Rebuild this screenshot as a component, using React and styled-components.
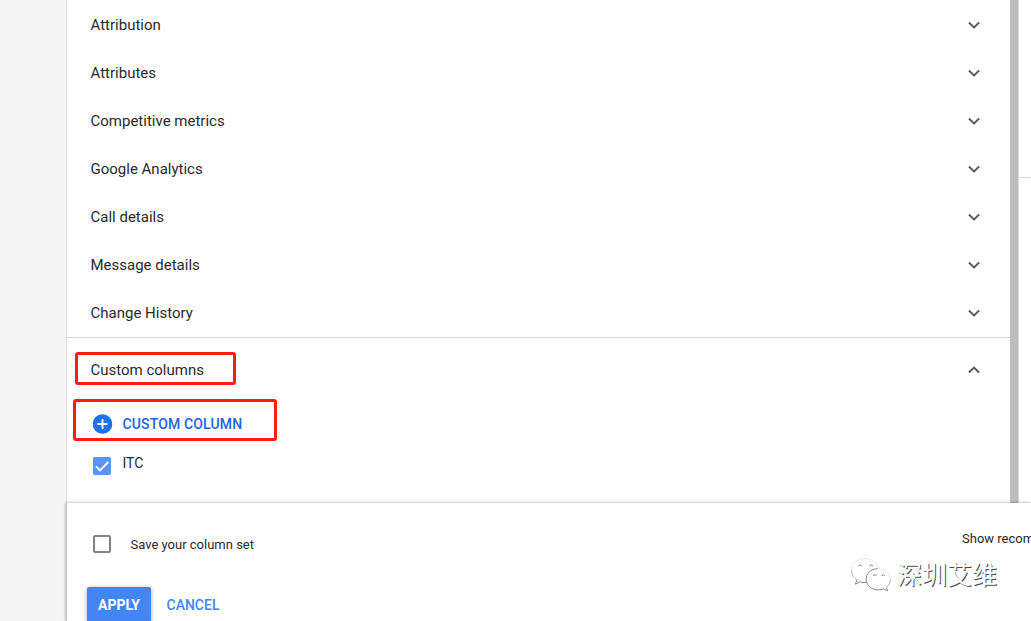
import React, {useState} from 'react';
import styled, {createGlobalStyle} from 'styled-components';

const groups = [
    'Attribution',
    'Attributes',
    'Competitive metrics',
    'Google Analytics',
    'Call details',
    'Message details',
    'Change History'
];

function Chevron({up})
{
    return (
        <ChevronIcon viewBox="0 0 12 8" $up={up}>
            <path d="M0.9 1.5 L6 6.5 L11.1 1.5"/>
        </ChevronIcon>
    );
}

function WeChatMark()
{
    return (
        <MarkIcon viewBox="0 0 42 36">
            <path className="faint" d="M29 11.5 C27 5 21 1.5 14.5 1.5 C7 1.5 1.5 6.5 1.5 13"/>
            <path className="soft" d="M1.5 13 C1.5 18 3.5 21 7 23.5"/>
            <path d="M7 23.5 L5.5 28 L10.5 25.5 C12.5 26.3 14.5 26.5 17 26"/>
            <path d="M28.5 12 C21.5 12 16.5 16.8 16.5 22.8 C16.5 29 22 33.8 29 33.8 C31 33.8 32.8 33.4 34.5 32.8 L38.5 34.8 L37.5 31.2"/>
            <path className="soft" d="M37.5 31.2 C40 29 41.3 26.3 41.3 23"/>
            <path className="faint" d="M41.3 23 C41.3 17 35.5 12 28.5 12"/>
            <path d="M8.5 9.6 C9 7.6 11.5 7.6 12 9.6 M20 9.6 C20.5 7.6 23 7.6 23.5 9.6 M23.8 19.6 C24.2 17.8 26.6 17.8 27 19.6 M32.5 19.6 C32.9 17.8 35.3 17.8 35.7 19.6"/>
        </MarkIcon>
    );
}

function App()
{
    const [itc, setItc] = useState(true);
    const [save, setSave] = useState(false);

    return (
        <>
            <GlobalStyle/>
            <Page>
                <Sidebar/>
                <Main>
                    <Upper>
                        <Panel>
                            <GroupList>
                                {groups.map((name) => (
                                    <GroupRow key={name}>
                                        <span>{name}</span>
                                        <Chevron/>
                                    </GroupRow>
                                ))}
                            </GroupList>
                            <CustomHeader>
                                <span>Custom columns</span>
                                <Chevron up/>
                            </CustomHeader>
                            <AddColumn>
                                <svg width="20" height="20" viewBox="0 0 20 20">
                                    <circle cx="9.5" cy="10" r="9.8" fill="#1a73e8"/>
                                    <path d="M9.5 5v10M4.5 10h10" stroke="#fff" strokeWidth="1.8"/>
                                </svg>
                                <span>CUSTOM COLUMN</span>
                            </AddColumn>
                            <ColumnOption onClick={() => setItc(!itc)}>
                                <Checkbox $checked={itc}>
                                    {itc && <svg width="18" height="18" viewBox="0 0 18 18">
                                        <path d="M3 9.3 L7 13.3 L15.3 5" fill="none" stroke="#fff" strokeWidth="1.9"/>
                                    </svg>}
                                </Checkbox>
                                <span>ITC</span>
                            </ColumnOption>
                            <Highlight $left={8} $top={352} $width={161} $height={33}/>
                            <Highlight $left={6} $top={399} $width={204} $height={42}/>
                        </Panel>
                        <Scrollbar/>
                        <Edge><EdgeTop/></Edge>
                    </Upper>
                    <Footer>
                        <FooterRow>
                            <SaveOption onClick={() => setSave(!save)}>
                                <Checkbox $checked={save}/>
                                Save your column set
                            </SaveOption>
                            <Preview>Show recom</Preview>
                        </FooterRow>
                        <Actions>
                            <Apply>APPLY</Apply>
                            <Cancel>CANCEL</Cancel>
                        </Actions>
                    </Footer>
                </Main>
                <Watermark>
                    <WeChatMark/>
                    <span>深圳艾维</span>
                </Watermark>
            </Page>
        </>
    );
}

const GlobalStyle = createGlobalStyle`
    *
    {
        box-sizing: border-box;
    }
    body
    {
        margin: 0;
        overflow: hidden;
        font-family: Roboto, "Liberation Sans", sans-serif;
        color: #2a2a2a;
        background-color: #fff;
    }
    button
    {
        border: none;
        padding: 0;
        background: none;
        font-family: inherit;
        cursor: pointer;
    }
`;

const Page = styled.div`
    position: relative;
    display: flex;
    width: 1031px;
    height: 621px;
    overflow: hidden;
`;

const Sidebar = styled.aside`
    flex: 0 0 66px;
    background-color: #f4f4f4;
`;

const Main = styled.main`
    flex: 1;
    min-width: 0;
    display: flex;
    flex-direction: column;
`;

const Upper = styled.div`
    flex: none;
    display: flex;
    height: 503px;
`;

const Panel = styled.section`
    position: relative;
    width: 944px;
    border-left: 1px solid #dadada;
    background-color: #fff;
`;

const GroupList = styled.div`
    padding-top: 1px;
    height: 338px;
    border-bottom: 1px solid #dadada;
`;

const GroupRow = styled.div`
    display: flex;
    align-items: center;
    justify-content: space-between;
    height: 48px;
    padding: 0 30px 0 23.5px;
    font-size: 15px;
    cursor: pointer;
`;

const CustomHeader = styled(GroupRow)`
    height: 64px;
`;

const ChevronIcon = styled.svg`
    width: 12px;
    height: 8px;
    fill: none;
    stroke: #4b5a6c;
    stroke-width: 1.9;
    transform: ${({$up}) => $up ? 'rotate(180deg)' : 'none'};
`;

const AddColumn = styled.button`
    display: flex;
    align-items: center;
    gap: 10px;
    height: 42px;
    margin: 1px 0 0 25.5px;
    color: #1a66e0;
    font-size: 14px;
    font-weight: 500;
    letter-spacing: 0.15px;
    span
    {
        padding-bottom: 1px;
    }
`;

const ColumnOption = styled.div`
    display: flex;
    gap: 11.5px;
    margin: 12px 0 0 26px;
    font-size: 14px;
    line-height: 13px;
    cursor: pointer;
`;

const Checkbox = styled.span`
    flex: none;
    display: block;
    width: 18px;
    height: 18px;
    border: ${({$checked}) => $checked ? 'none' : '2px solid #828282'};
    border-radius: 2px;
    background-color: ${({$checked}) => $checked ? '#5a95f5' : '#fff'};
    svg
    {
        display: block;
    }
`;

/* Red marker frames laid over the panel */
const Highlight = styled.div`
    position: absolute;
    left: ${({$left}) => $left}px;
    top: ${({$top}) => $top}px;
    width: ${({$width}) => $width}px;
    height: ${({$height}) => $height}px;
    border: 3px solid #fb1d10;
    border-radius: 3px;
    pointer-events: none;
`;

const Scrollbar = styled.div`
    width: 8px;
    background-color: #bdbdbd;
`;

const Edge = styled.div`
    flex: 1;
    border-left: 1px solid #dadada;
`;

const EdgeTop = styled.div`
    height: 178px;
    border-bottom: 1px solid #dadada;
`;

const Footer = styled.footer`
    position: relative;
    flex: 1;
    min-height: 0;
    border-left: 1px solid #c4c4c4;
    background-color: #fff;
    box-shadow: 0 0 3px rgba(0, 0, 0, 0.4);
`;

const FooterRow = styled.div`
    display: flex;
    justify-content: space-between;
    padding: 32px 0 0 26px;
    height: 84px;
    font-size: 13px;
`;

const SaveOption = styled.div`
    display: flex;
    align-items: center;
    gap: 19.5px;
    height: 18px;
    cursor: pointer;
`;

const Preview = styled.div`
    width: 69px;
    margin-top: -4px;
    line-height: 16px;
    white-space: nowrap;
`;

const Actions = styled.div`
    display: flex;
    gap: 15.5px;
    padding-left: 20px;
`;

const Apply = styled.button`
    width: 64px;
    height: 36px;
    border-radius: 2px;
    background-color: #4285f4;
    box-shadow: 0 1px 4px rgba(0, 0, 0, 0.35);
    color: #fff;
    font-size: 14px;
    font-weight: 700;
`;

const Cancel = styled.button`
    height: 36px;
    color: #4285f4;
    font-size: 14px;
    font-weight: 500;
`;

const Watermark = styled.div`
    position: absolute;
    left: 850px;
    top: 556px;
    display: flex;
    gap: 6px;
    color: #fff;
    font-family: "Noto Sans CJK SC", sans-serif;
    font-size: 25px;
    line-height: 35px;
    text-shadow: 1px 1px 0 #4a4a4a;
`;

const MarkIcon = styled.svg`
    width: 41px;
    height: 35px;
    margin-top: 1px;
    fill: none;
    stroke: #777;
    stroke-width: 0.9;
    .soft
    {
        stroke: #aaa;
    }
    .faint
    {
        stroke: #e4e4e4;
    }
`;

export default App;
